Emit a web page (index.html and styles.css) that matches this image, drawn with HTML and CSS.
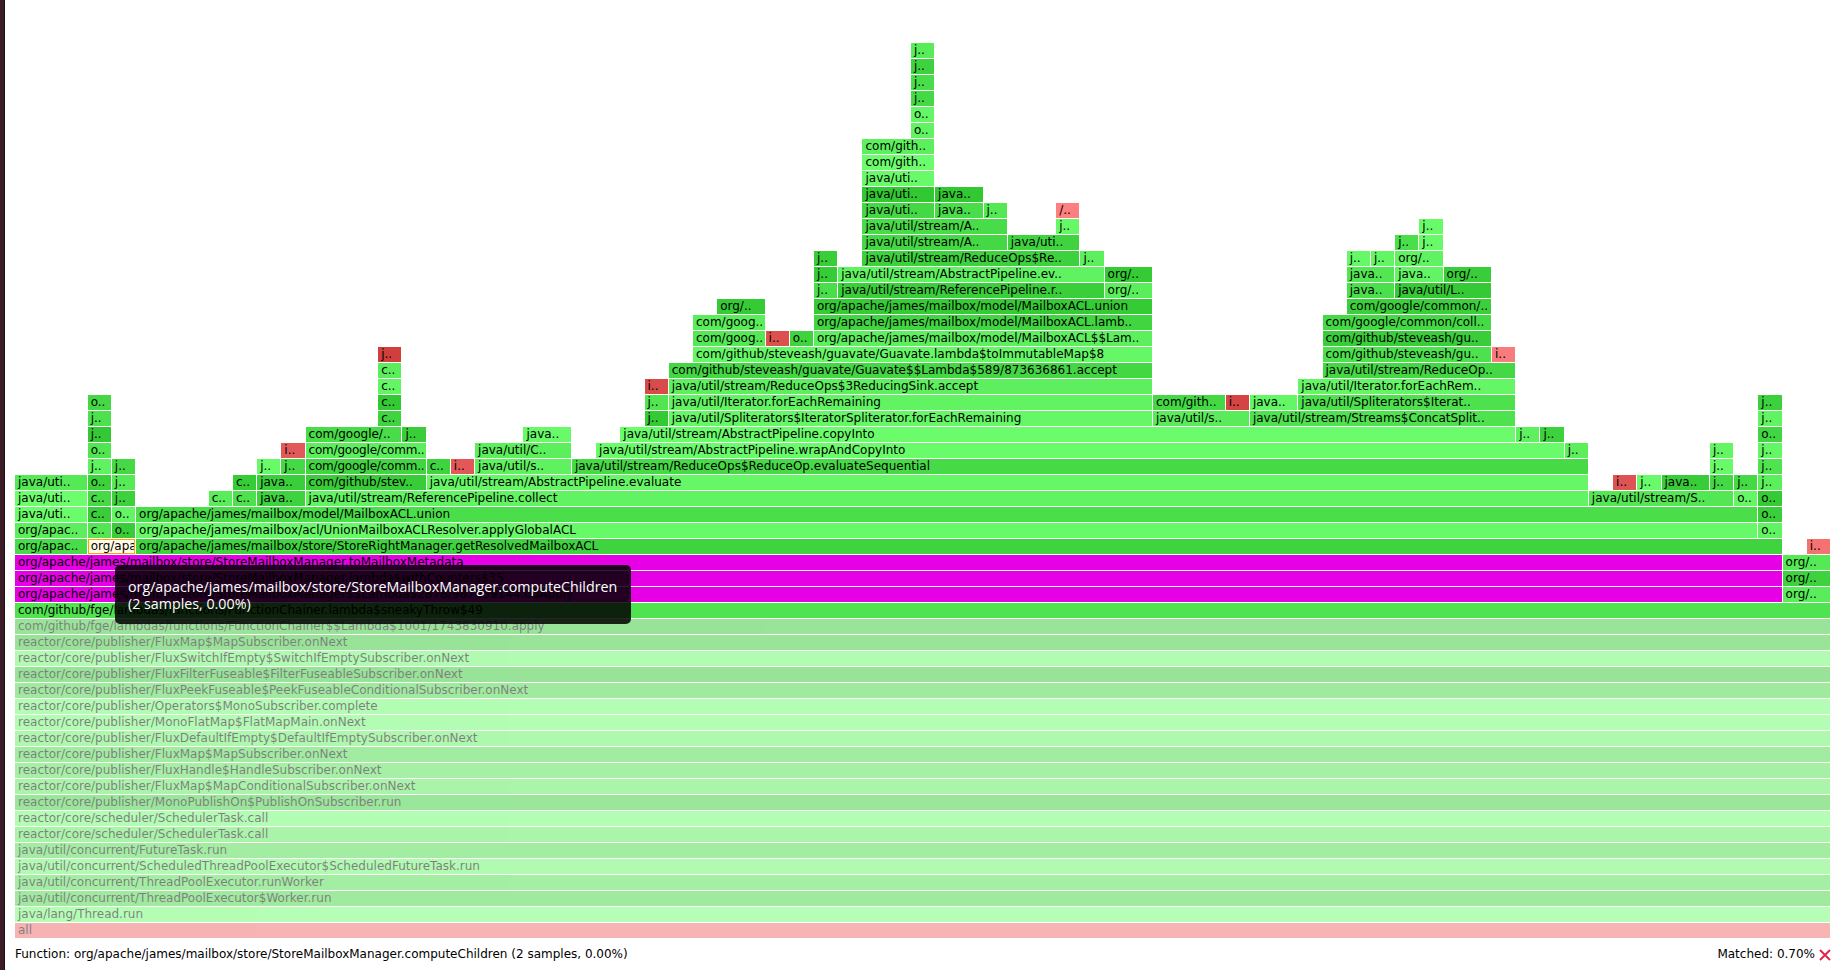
FILE: index.html
```html
<!DOCTYPE html>
<html lang="en">
<head>
<meta charset="utf-8">
<title>Flame Graph</title>
<link rel="stylesheet" href="styles.css">
</head>
<body>
<div class="edge"></div>
<main class="viewer">
  <div class="chart" id="chart"></div>
  <div class="status">
    <span class="details">Function: org/apache/james/mailbox/store/StoreMailboxManager.computeChildren (2 samples, 0.00%)</span>
    <span class="matched">Matched: 0.70%<svg class="clear" width="12" height="12" viewBox="0 0 12 12"><path d="M1 1 L11 11 M11 1 L1 11"/></svg></span>
  </div>
  <div class="tooltip">
    <div class="tip-name">org/apache/james/mailbox/store/StoreMailboxManager.computeChildren</div>
    <div class="tip-info">(2 samples, 0.00%)</div>
  </div>
</main>
<script src="app.js"></script>
</body>
</html>
```

FILE: styles.css
```css
html, body {
  margin: 0;
  padding: 0;
  background: #ffffff;
}

body {
  display: flex;
  width: 1840px;
  height: 970px;
  overflow: hidden;
  font-family: "DejaVu Sans", Verdana, sans-serif;
  font-size: 12px;
  color: #000000;
}

.edge {
  flex: none;
  width: 4px;
  background: #3b1c27;
  border-right: 1px solid #161214;
}

.viewer {
  position: relative;
  flex: none;
  width: 1835px;
  padding: 43px 0 0 10px;
  box-sizing: border-box;
}

.chart {
  display: grid;
  width: 1816px;
  grid-template-columns: repeat(75, minmax(0, 1fr));
  grid-template-rows: repeat(56, 16px);
}

.frame {
  min-width: 0;
  height: 15px;
  margin-right: 1px;
  padding-left: 3px;
  box-sizing: border-box;
  overflow: hidden;
  white-space: nowrap;
  line-height: 15px;
  color: #000000;
}

.frame.tight {
  letter-spacing: -0.2px;
}

.frame.match {
  background: rgb(230, 0, 230);
}

.frame.hover {
  background: #fffbe8;
  border: 1px solid #f2a900;
  padding-left: 2px;
  line-height: 13px;
}

.frame.faded {
  opacity: 0.5;
}

.status {
  display: flex;
  justify-content: space-between;
  align-items: center;
  width: 1816px;
  margin-top: 8px;
  line-height: 15px;
}

.matched {
  display: flex;
  align-items: center;
  gap: 4px;
}

.clear path {
  stroke: #e2264d;
  stroke-width: 2;
  fill: none;
}

.tooltip {
  position: absolute;
  left: 110px;
  top: 565px;
  width: 516px;
  box-sizing: border-box;
  padding: 13px 0 12px 13px;
  border-radius: 5px;
  background: rgba(0, 0, 0, 0.85);
  color: #ffffff;
  font-family: "Open Sans", "Noto Sans", sans-serif;
  font-size: 14.25px;
  line-height: 17px;
  white-space: nowrap;
}
```

FILE: app.js
```js
(function () {
  var DATA = [
    [55, [[37, 1, 'j..']]],
    [54, [[37, 1, 'j..']]],
    [53, [[37, 1, 'j..']]],
    [52, [[37, 1, 'j..']]],
    [51, [[37, 1, 'o..']]],
    [50, [[37, 1, 'o..']]],
    [49, [[35, 3, 'com/gith..']]],
    [48, [[35, 3, 'com/gith..']]],
    [47, [[35, 3, 'java/uti..']]],
    [46, [[35, 3, 'java/uti..'], [38, 2, 'java..']]],
    [45, [[35, 3, 'java/uti..'], [38, 2, 'java..'], [40, 1, 'j..'], [43, 1, '/..', 'r']]],
    [44, [[35, 6, 'java/util/stream/A..'], [43, 1, 'j..'], [58, 1, 'j..']]],
    [43, [[35, 6, 'java/util/stream/A..'], [41, 3, 'java/uti..'], [57, 1, 'j..'], [58, 1, 'j..']]],
    [42, [[33, 1, 'j..'], [35, 9, 'java/util/stream/ReduceOps$Re..'], [44, 1, 'j..'], [55, 1, 'j..'], [56, 1, 'j..'], [57, 2, 'org/..']]],
    [41, [[33, 1, 'j..'], [34, 11, 'java/util/stream/AbstractPipeline.ev..'], [45, 2, 'org/..'], [55, 2, 'java..'], [57, 2, 'java..'], [59, 2, 'org/..']]],
    [40, [[33, 1, 'j..'], [34, 11, 'java/util/stream/ReferencePipeline.r..'], [45, 2, 'org/..'], [55, 2, 'java..'], [57, 4, 'java/util/L..']]],
    [39, [[29, 2, 'org/..'], [33, 14, 'org/apache/james/mailbox/model/MailboxACL.union'], [55, 6, 'com/google/common/..']]],
    [38, [[28, 3, 'com/goog..'], [33, 14, 'org/apache/james/mailbox/model/MailboxACL.lamb..'], [54, 7, 'com/google/common/coll..']]],
    [37, [[28, 3, 'com/goog..'], [31, 1, 'i..', 'r'], [32, 1, 'o..'], [33, 14, 'org/apache/james/mailbox/model/MailboxACL$$Lam..'], [54, 7, 'com/github/steveash/gu..']]],
    [36, [[15, 1, 'j..', 'r'], [28, 19, 'com/github/steveash/guavate/Guavate.lambda$toImmutableMap$8'], [54, 7, 'com/github/steveash/gu..'], [61, 1, 'i..', 'r']]],
    [35, [[15, 1, 'c..'], [27, 20, 'com/github/steveash/guavate/Guavate$$Lambda$589/873636861.accept'], [54, 8, 'java/util/stream/ReduceOp..']]],
    [34, [[15, 1, 'c..'], [26, 1, 'i..', 'r'], [27, 20, 'java/util/stream/ReduceOps$3ReducingSink.accept'], [53, 9, 'java/util/Iterator.forEachRem..']]],
    [33, [[3, 1, 'o..'], [15, 1, 'c..'], [26, 1, 'j..'], [27, 20, 'java/util/Iterator.forEachRemaining'], [47, 3, 'com/gith..'], [50, 1, 'i..', 'r'], [51, 2, 'java..'], [53, 9, 'java/util/Spliterators$Iterat..'], [72, 1, 'j..']]],
    [32, [[3, 1, 'j..'], [15, 1, 'c..'], [26, 1, 'j..'], [27, 20, 'java/util/Spliterators$IteratorSpliterator.forEachRemaining'], [47, 4, 'java/util/s..'], [51, 11, 'java/util/stream/Streams$ConcatSplit..'], [72, 1, 'j..']]],
    [31, [[3, 1, 'j..'], [12, 4, 'com/google/..'], [16, 1, 'j..'], [21, 2, 'java..'], [25, 37, 'java/util/stream/AbstractPipeline.copyInto'], [62, 1, 'j..'], [63, 1, 'j..'], [72, 1, 'o..']]],
    [30, [[3, 1, 'o..'], [11, 1, 'i..', 'r'], [12, 5, 'com/google/comm..'], [19, 4, 'java/util/C..'], [24, 40, 'java/util/stream/AbstractPipeline.wrapAndCopyInto'], [64, 1, 'j..'], [70, 1, 'j..'], [72, 1, 'j..']]],
    [29, [[3, 1, 'j..'], [4, 1, 'j..'], [10, 1, 'j..'], [11, 1, 'j..'], [12, 5, 'com/google/comm..'], [17, 1, 'c..'], [18, 1, 'i..', 'r'], [19, 4, 'java/util/s..'], [23, 42, 'java/util/stream/ReduceOps$ReduceOp.evaluateSequential'], [70, 1, 'j..'], [72, 1, 'j..']]],
    [28, [[0, 3, 'java/uti..'], [3, 1, 'o..'], [4, 1, 'j..'], [9, 1, 'c..'], [10, 2, 'java..'], [12, 5, 'com/github/stev..'], [17, 48, 'java/util/stream/AbstractPipeline.evaluate'], [66, 1, 'i..', 'r'], [67, 1, 'j..'], [68, 2, 'java..'], [70, 1, 'j..'], [71, 1, 'j..'], [72, 1, 'j..']]],
    [27, [[0, 3, 'java/uti..'], [3, 1, 'c..'], [4, 1, 'j..'], [8, 1, 'c..'], [9, 1, 'c..'], [10, 2, 'java..'], [12, 53, 'java/util/stream/ReferencePipeline.collect'], [65, 6, 'java/util/stream/S..'], [71, 1, 'o..'], [72, 1, 'o..']]],
    [26, [[0, 3, 'java/uti..'], [3, 1, 'c..'], [4, 1, 'o..'], [5, 67, 'org/apache/james/mailbox/model/MailboxACL.union'], [72, 1, 'o..']]],
    [25, [[0, 3, 'org/apac..'], [3, 1, 'c..'], [4, 1, 'o..'], [5, 67, 'org/apache/james/mailbox/acl/UnionMailboxACLResolver.applyGlobalACL'], [72, 1, 'o..']]],
    [24, [[0, 3, 'org/apac..'], [3, 2, 'org/apa', 'h'], [5, 68, 'org/apache/james/mailbox/store/StoreRightManager.getResolvedMailboxACL'], [74, 1, 'i..', 'r']]],
    [23, [[0, 73, 'org/apache/james/mailbox/store/StoreMailboxManager.toMailboxMetadata', 'm'], [73, 2, 'org/..']]],
    [22, [[0, 73, 'org/apache/james/mailbox/store/StoreMailboxManager.lambda$withCounters$35', 'm'], [73, 2, 'org/..']]],
    [21, [[0, 73, 'org/apache/james/mailbox/store/StoreMailboxManager$$Lambda$2878/987659144.doApply', 'm'], [73, 2, 'org/..']]],
    [20, [[0, 75, 'com/github/fge/lambdas/functions/FunctionChainer.lambda$sneakyThrow$49', 'g', 0.5]]],
    [19, [[0, 75, 'com/github/fge/lambdas/functions/FunctionChainer$$Lambda$1001/1743830910.apply']]],
    [18, [[0, 75, 'reactor/core/publisher/FluxMap$MapSubscriber.onNext']]],
    [17, [[0, 75, 'reactor/core/publisher/FluxSwitchIfEmpty$SwitchIfEmptySubscriber.onNext']]],
    [16, [[0, 75, 'reactor/core/publisher/FluxFilterFuseable$FilterFuseableSubscriber.onNext']]],
    [15, [[0, 75, 'reactor/core/publisher/FluxPeekFuseable$PeekFuseableConditionalSubscriber.onNext']]],
    [14, [[0, 75, 'reactor/core/publisher/Operators$MonoSubscriber.complete']]],
    [13, [[0, 75, 'reactor/core/publisher/MonoFlatMap$FlatMapMain.onNext']]],
    [12, [[0, 75, 'reactor/core/publisher/FluxDefaultIfEmpty$DefaultIfEmptySubscriber.onNext']]],
    [11, [[0, 75, 'reactor/core/publisher/FluxMap$MapSubscriber.onNext']]],
    [10, [[0, 75, 'reactor/core/publisher/FluxHandle$HandleSubscriber.onNext']]],
    [9, [[0, 75, 'reactor/core/publisher/FluxMap$MapConditionalSubscriber.onNext']]],
    [8, [[0, 75, 'reactor/core/publisher/MonoPublishOn$PublishOnSubscriber.run']]],
    [7, [[0, 75, 'reactor/core/scheduler/SchedulerTask.call']]],
    [6, [[0, 75, 'reactor/core/scheduler/SchedulerTask.call']]],
    [5, [[0, 75, 'java/util/concurrent/FutureTask.run']]],
    [4, [[0, 75, 'java/util/concurrent/ScheduledThreadPoolExecutor$ScheduledFutureTask.run']]],
    [3, [[0, 75, 'java/util/concurrent/ThreadPoolExecutor.runWorker']]],
    [2, [[0, 75, 'java/util/concurrent/ThreadPoolExecutor$Worker.run']]],
    [1, [[0, 75, 'java/lang/Thread.run']]],
    [0, [[0, 75, 'all', 'r', 0.7]]]
  ];

  var seed = 1234567;
  function rnd() {
    seed = (seed * 16807) % 2147483647;
    return (seed - 1) / 2147483646;
  }

  function colour(type, v) {
    var a, b;
    if (type === 'r') {
      a = 200 + Math.floor(55 * v);
      b = 50 + Math.floor(80 * v);
      return 'rgb(' + a + ',' + b + ',' + b + ')';
    }
    a = 50 + Math.floor(60 * v);
    b = 200 + Math.floor(55 * v);
    return 'rgb(' + a + ',' + b + ',' + a + ')';
  }

  var chart = document.getElementById('chart');
  var made = [];
  DATA.forEach(function (row) {
    var level = row[0];
    row[1].forEach(function (f) {
      var type = f[3] || 'g';
      var el = document.createElement('div');
      var cls = 'frame';
      if (type === 'm') cls += ' match';
      if (type === 'h') cls += ' hover';
      if (level < 20) cls += ' faded';
      el.className = cls;
      el.style.gridRow = String(56 - level);
      el.style.gridColumn = (f[0] + 1) + ' / span ' + f[1];
      if (type === 'g' || type === 'r') {
        var v = (typeof f[4] === 'number') ? f[4] : rnd();
        el.style.backgroundColor = colour(type, v);
      }
      el.textContent = f[2];
      chart.appendChild(el);
      if (type !== 'h') made.push(el);
    });
  });

  made.forEach(function (el) {
    if (el.scrollWidth > el.clientWidth) el.classList.add('tight');
  });
})();
```
